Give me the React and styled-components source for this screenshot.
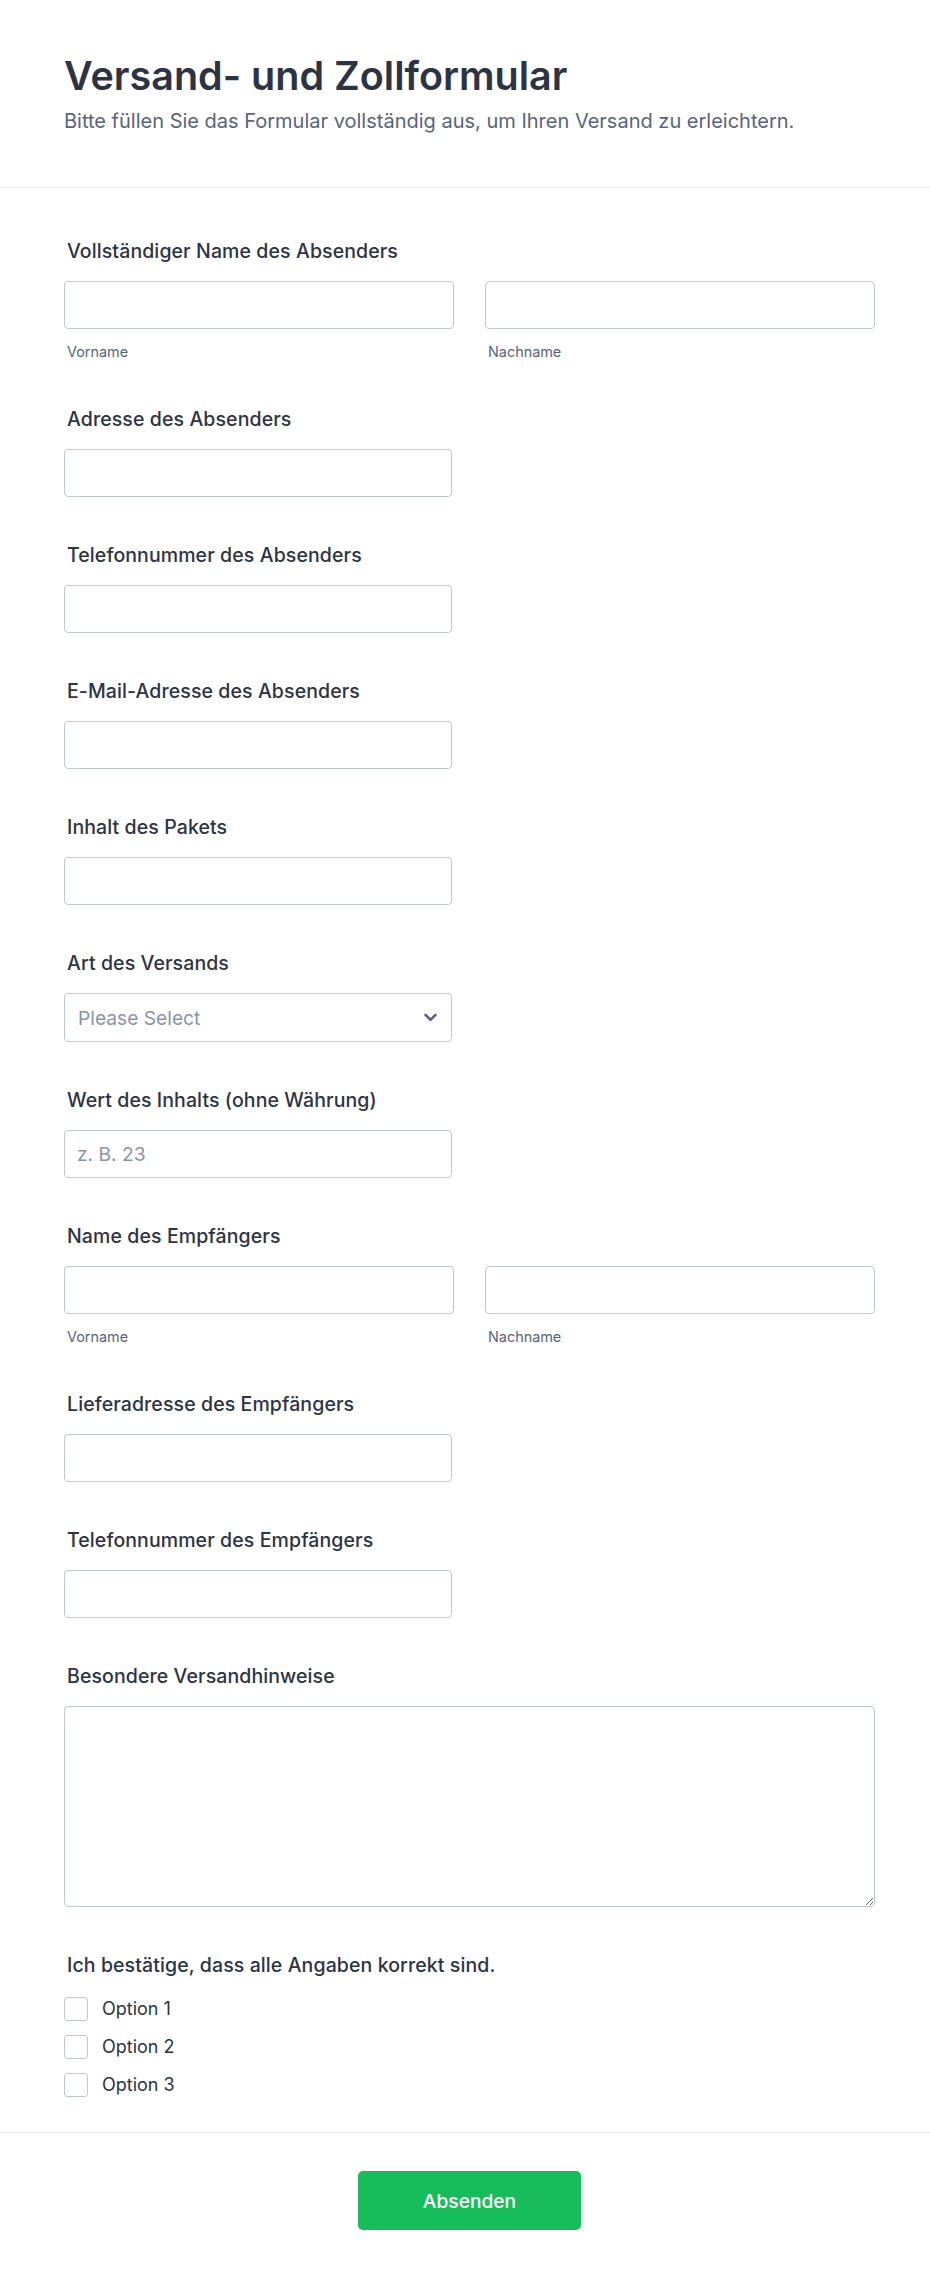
import React from 'react';
import styled, { createGlobalStyle } from 'styled-components';

const Global = createGlobalStyle`
  body {
    margin: 0;
    background: #fff;
    font-family: Inter, "Noto Sans", sans-serif;
    color: #2c3345;
  }
  * {
    box-sizing: border-box;
  }
`;

const Page = styled.div`
  width: 930px;
  background: #fff;
`;

const Header = styled.header`
  padding: 53px 64px 52px;
  border-bottom: 1px solid #e3e6ec;
`;

const Title = styled.h1`
  margin: 0;
  font-size: 39.5px;
  line-height: 1.2;
  font-weight: 600;
  color: #2c3345;
`;

const Subtitle = styled.p`
  margin: 8px 0 0;
  font-size: 20px;
  line-height: 1.35;
  color: #57647e;
`;

const Body = styled.div`
  padding: 28px 55px 12px 64px;
`;

const Field = styled.div`
  padding: 23px 0;
`;

const Label = styled.label`
  display: block;
  padding-left: 3px;
  margin-bottom: 18px;
  font-size: 19.5px;
  line-height: 24px;
  letter-spacing: 0.1px;
  font-weight: 500;
  color: #2c3345;
`;

const Row = styled.div`
  display: grid;
  grid-template-columns: 390px 390px;
  column-gap: 31px;
`;

const Input = styled.input`
  display: block;
  width: ${(p) => (p.$full ? '100%' : '388px')};
  height: 48px;
  padding: 0 12px;
  border: 1px solid #bfc6d4;
  border-radius: 4px;
  font-family: inherit;
  font-size: 19.2px;
  color: #2c3345;
  background: #fff;
  outline: none;

  &::placeholder {
    color: #8894ab;
  }
`;

const Sublabel = styled.span`
  display: block;
  margin-top: 14px;
  padding-left: 3px;
  font-size: 14.4px;
  line-height: 18px;
  color: #57647e;
`;

const SelectBox = styled.div`
  display: flex;
  align-items: center;
  justify-content: space-between;
  width: 388px;
  height: 49px;
  padding: 0 14px 0 13px;
  border: 1px solid #bfc6d4;
  border-radius: 4px;
  font-size: 19.2px;
  color: #8894ab;
`;

const TextArea = styled.textarea`
  display: block;
  width: 100%;
  height: 201px;
  padding: 12px;
  border: 1px solid #bfc6d4;
  border-radius: 4px;
  font-family: inherit;
  font-size: 19.2px;
  outline: none;
`;

const Options = styled.div`
  display: flex;
  flex-direction: column;
  gap: 14px;
  padding-top: 2px;
`;

const Option = styled.label`
  display: flex;
  align-items: center;
  gap: 14px;
  font-size: 18px;
  line-height: 24px;
  color: #2c3345;
`;

const Box = styled.span`
  width: 24px;
  height: 24px;
  border: 1px solid #bfc6d4;
  border-radius: 3px;
  background: #fff;
`;

const Footer = styled.div`
  display: flex;
  justify-content: center;
  padding: 38px 55px 50px 64px;
  border-top: 1px solid #e3e6ec;
`;

const Submit = styled.button`
  width: 223px;
  height: 59px;
  border: none;
  border-radius: 5px;
  background: #18bd5b;
  color: #fff;
  font-family: inherit;
  font-size: 19.2px;
  font-weight: 500;
`;

function NameField({ label }) {
  return (
    <Field>
      <Label>{label}</Label>
      <Row>
        <div>
          <Input $full />
          <Sublabel>Vorname</Sublabel>
        </div>
        <div>
          <Input $full />
          <Sublabel>Nachname</Sublabel>
        </div>
      </Row>
    </Field>
  );
}

function TextField({ label, placeholder }) {
  return (
    <Field>
      <Label>{label}</Label>
      <Input placeholder={placeholder} />
    </Field>
  );
}

export default function App() {
  return (
    <Page>
      <Global />
      <Header>
        <Title>Versand- und Zollformular</Title>
        <Subtitle>Bitte füllen Sie das Formular vollständig aus, um Ihren Versand zu erleichtern.</Subtitle>
      </Header>
      <Body>
        <NameField label="Vollständiger Name des Absenders" />
        <TextField label="Adresse des Absenders" />
        <TextField label="Telefonnummer des Absenders" />
        <TextField label="E-Mail-Adresse des Absenders" />
        <TextField label="Inhalt des Pakets" />
        <Field>
          <Label>Art des Versands</Label>
          <SelectBox>
            <span>Please Select</span>
            <svg width="13" height="9" viewBox="0 0 13 9" fill="none">
              <polyline points="1.5,1.8 6.5,6.8 11.5,1.8" stroke="#57647e" strokeWidth="2.6" strokeLinecap="round" strokeLinejoin="round" />
            </svg>
          </SelectBox>
        </Field>
        <TextField label="Wert des Inhalts (ohne Währung)" placeholder="z. B. 23" />
        <NameField label="Name des Empfängers" />
        <TextField label="Lieferadresse des Empfängers" />
        <TextField label="Telefonnummer des Empfängers" />
        <Field>
          <Label>Besondere Versandhinweise</Label>
          <TextArea />
        </Field>
        <Field>
          <Label>Ich bestätige, dass alle Angaben korrekt sind.</Label>
          <Options>
            {['Option 1', 'Option 2', 'Option 3'].map((o) => (
              <Option key={o}>
                <Box />
                {o}
              </Option>
            ))}
          </Options>
        </Field>
      </Body>
      <Footer>
        <Submit>Absenden</Submit>
      </Footer>
    </Page>
  );
}
